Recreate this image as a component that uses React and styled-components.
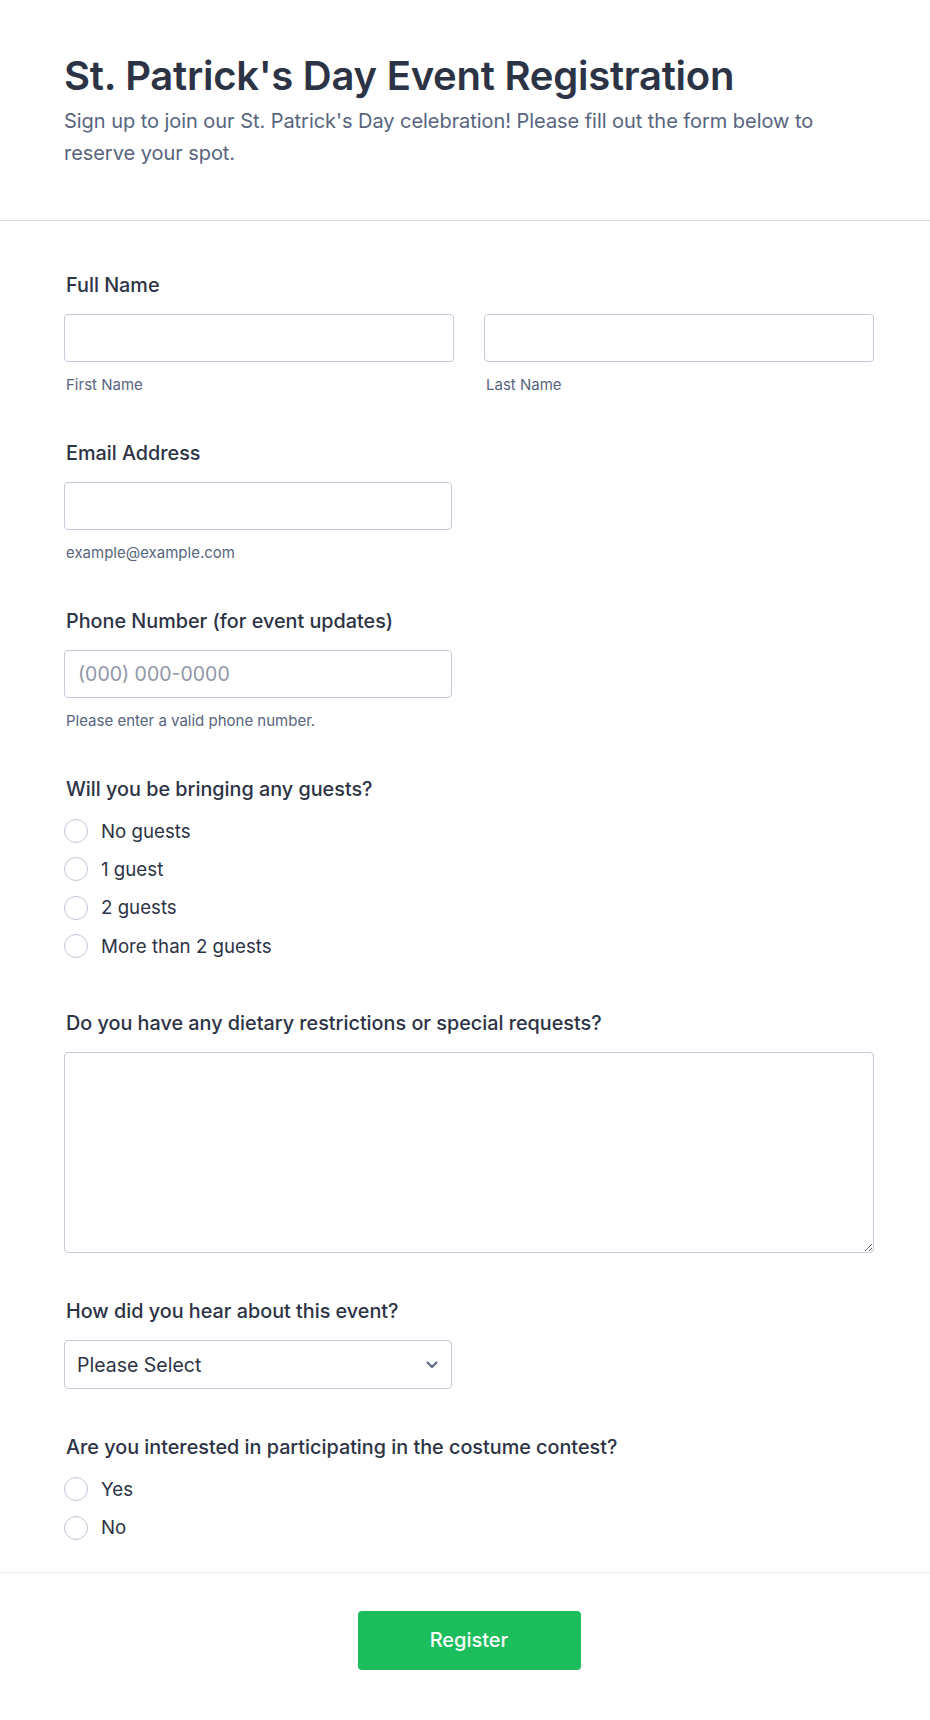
import React from "react";
import styled, { createGlobalStyle } from "styled-components";

const Global = createGlobalStyle`
  html, body { margin: 0; padding: 0; background: #fff; }
  body { font-family: Inter, "Noto Sans", Arial, sans-serif; color: #2c3345; }
  * { box-sizing: border-box; }
`;

const Page = styled.div`
  width: 930px;
  background: #fff;
`;

const Header = styled.header`
  padding: 52px 56px 51px 64px;
  border-bottom: 1px solid #d8dbe6;
`;

const Title = styled.h1`
  margin: 0;
  font-size: 40px;
  line-height: 48px;
  font-weight: 600;
  color: #2c3345;
  letter-spacing: -0.25px;
`;

const Subtitle = styled.p`
  margin: 5px 0 0;
  font-size: 20px;
  line-height: 32px;
  color: #57647e;
  letter-spacing: -0.05px;
`;

const Form = styled.form`
  padding: 52px 56px 25px 64px;
  display: flex;
  flex-direction: column;
  gap: 46px;
  border-bottom: 1px solid #eaecf2;
`;

const Field = styled.div`
  display: flex;
  flex-direction: column;
`;

const Label = styled.label`
  display: block;
  font-size: 19.8px;
  line-height: 24px;
  font-weight: 500;
  color: #2c3345;
  padding-left: 2px;
  margin-bottom: ${(p) => (p.$tight ? "11px" : "17px")};
`;

const Row = styled.div`
  display: grid;
  grid-template-columns: 1fr 1fr;
  gap: 30px;
`;

const Col = styled.div`
  display: flex;
  flex-direction: column;
  width: ${(p) => p.$w || "auto"};
`;

const Input = styled.input`
  width: 100%;
  height: 48px;
  border: 1px solid #c3cad8;
  border-radius: 4px;
  padding: 0 13px;
  font-family: inherit;
  font-size: 19.5px;
  color: #2c3345;
  background: #fff;
  outline: none;
  &::placeholder { color: #8f96a8; }
`;

const Sub = styled.span`
  display: block;
  margin-top: 13px;
  padding-left: 2px;
  font-size: 15px;
  line-height: 20px;
  color: #57647e;
`;

const Options = styled.div`
  display: flex;
  flex-direction: column;
`;

const Option = styled.label`
  display: flex;
  align-items: center;
  gap: 13px;
  height: 38.3px;
  font-size: 18.7px;
  color: #2c3345;
  cursor: pointer;
`;

const Radio = styled.input.attrs({ type: "radio" })`
  appearance: none;
  -webkit-appearance: none;
  margin: 0;
  width: 24px;
  height: 24px;
  border: 1px solid #bfc6d4;
  border-radius: 50%;
  background: #fff;
  flex-shrink: 0;
`;

const TextArea = styled.textarea`
  width: 100%;
  height: 201px;
  border: 1px solid #c3cad8;
  border-radius: 4px;
  padding: 12px 13px;
  font-family: inherit;
  font-size: 19.5px;
  color: #2c3345;
  outline: none;
  resize: vertical;
`;

const SelectWrap = styled.div`
  position: relative;
  width: 388px;
`;

const Select = styled.select`
  appearance: none;
  -webkit-appearance: none;
  width: 100%;
  height: 49px;
  border: 1px solid #c3cad8;
  border-radius: 4px;
  padding: 0 40px 0 12px;
  font-family: inherit;
  font-size: 19.5px;
  color: #2c3345;
  background: #fff;
  outline: none;
`;

const Chevron = styled.svg`
  position: absolute;
  right: 14px;
  top: 50%;
  transform: translateY(-50%);
  pointer-events: none;
`;

const Footer = styled.div`
  display: flex;
  justify-content: center;
  padding: 38px 56px 50px 64px;
`;

const Button = styled.button`
  width: 223px;
  height: 59px;
  border: none;
  border-radius: 4px;
  background: #1bbd5c;
  color: #fff;
  font-family: inherit;
  font-size: 20px;
  font-weight: 500;
  cursor: pointer;
`;

const RadioGroup = ({ name, options }) => (
  <Options>
    {options.map((o) => (
      <Option key={o}>
        <Radio name={name} />
        {o}
      </Option>
    ))}
  </Options>
);

export default function App() {
  return (
    <Page>
      <Global />
      <Header>
        <Title>St. Patrick's Day Event Registration</Title>
        <Subtitle>
          Sign up to join our St. Patrick's Day celebration! Please fill out the form below to reserve your spot.
        </Subtitle>
      </Header>
      <Form onSubmit={(e) => e.preventDefault()}>
        <Field>
          <Label>Full Name</Label>
          <Row>
            <Col>
              <Input type="text" />
              <Sub>First Name</Sub>
            </Col>
            <Col>
              <Input type="text" />
              <Sub>Last Name</Sub>
            </Col>
          </Row>
        </Field>
        <Field>
          <Label>Email Address</Label>
          <Col $w="388px">
            <Input type="email" />
            <Sub>example@example.com</Sub>
          </Col>
        </Field>
        <Field>
          <Label>Phone Number (for event updates)</Label>
          <Col $w="388px">
            <Input type="tel" placeholder="(000) 000-0000" />
            <Sub>Please enter a valid phone number.</Sub>
          </Col>
        </Field>
        <Field>
          <Label $tight>Will you be bringing any guests?</Label>
          <RadioGroup name="guests" options={["No guests", "1 guest", "2 guests", "More than 2 guests"]} />
        </Field>
        <Field>
          <Label>Do you have any dietary restrictions or special requests?</Label>
          <TextArea />
        </Field>
        <Field>
          <Label>How did you hear about this event?</Label>
          <SelectWrap>
            <Select defaultValue="">
              <option value="">Please Select</option>
              <option>Social Media</option>
              <option>Friend or Family</option>
              <option>Email</option>
              <option>Other</option>
            </Select>
            <Chevron width="12" height="8" viewBox="0 0 12 8" fill="none">
              <path d="M1.5 1.5L6 6L10.5 1.5" stroke="#57647e" strokeWidth="2" strokeLinecap="round" strokeLinejoin="round" />
            </Chevron>
          </SelectWrap>
        </Field>
        <Field>
          <Label $tight>Are you interested in participating in the costume contest?</Label>
          <RadioGroup name="costume" options={["Yes", "No"]} />
        </Field>
      </Form>
      <Footer>
        <Button type="button">Register</Button>
      </Footer>
    </Page>
  );
}
